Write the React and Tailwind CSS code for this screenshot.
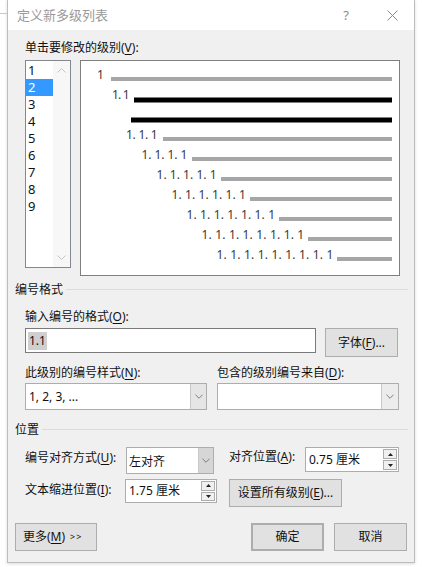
import React from "react";

const font = { fontFamily: '"Noto Sans", "Noto Sans CJK SC", sans-serif' };

function Chevron({ up = false, color = "#606060", w = 9, h = 5 }) {
  return (
    <svg width={w} height={h} viewBox="0 0 9 5" className="block">
      <polyline
        points={up ? "0.5,4.5 4.5,0.5 8.5,4.5" : "0.5,0.5 4.5,4.5 8.5,0.5"}
        fill="none"
        stroke={color}
        strokeWidth="1"
      />
    </svg>
  );
}

function DropButton({ className = "" }) {
  return (
    <div className={"flex items-center justify-center border-l border-[#c9c9c9] " + className}>
      <Chevron color="#707070" w={8} h={5} />
    </div>
  );
}

function Spinner() {
  return (
    <div className="flex flex-col gap-[1px] py-[1px] pr-[1px]">
      <div className="w-[14px] h-[10px] border border-[#adadad] bg-[#f0f0f0] flex items-center justify-center">
        <svg width="5" height="3" viewBox="0 0 5 3"><polygon points="0,3 2.5,0 5,3" fill="#222" /></svg>
      </div>
      <div className="w-[14px] h-[10px] border border-[#adadad] bg-[#f0f0f0] flex items-center justify-center">
        <svg width="5" height="3" viewBox="0 0 5 3"><polygon points="0,0 2.5,3 5,0" fill="#222" /></svg>
      </div>
    </div>
  );
}

function Btn({ children, className = "" }) {
  return (
    <div
      className={
        "flex items-center justify-center bg-[#e1e1e1] border border-[#adadad] text-[12px] text-[#111] " +
        className
      }
    >
      {children}
    </div>
  );
}

const rows = [
  { n: 1, x: 97, bar: 111, black: false },
  { n: 2, x: 112, bar: 134, black: true },
  { n: 0, x: 0, bar: 131, black: true },
  { n: 3, x: 126, bar: 163 },
  { n: 4, x: 141.5, bar: 192 },
  { n: 5, x: 156.5, bar: 221 },
  { n: 6, x: 171.5, bar: 250 },
  { n: 7, x: 186.5, bar: 279 },
  { n: 8, x: 201.5, bar: 308 },
  { n: 9, x: 216.5, bar: 337 },
];

function Preview() {
  // coordinates are page coords shifted by the box's origin (80,60)
  return (
    <svg width="318" height="214" viewBox="81 61 318 214" className="block">
      {rows.map((r, i) => {
        const base = 79 + i * 20;
        const barY = r.black ? base - 1.5 : base - 2;
        const label = Array.from({ length: r.n }, () => "1").join(". ");
        const len = r.n > 1 ? 17.5 + 14.2 * (r.n - 2) : undefined;
        return (
          <g key={i}>
            {r.n > 0 && (
              <text
                x={r.x}
                y={base}
                fontSize="12"
                fill="#3a3a3a"
                fontFamily='"Noto Sans", sans-serif'
                textLength={len}
                lengthAdjust={len ? "spacing" : undefined}
              >
                {label}
              </text>
            )}
            <rect
              x={r.bar}
              y={barY}
              width={392 - r.bar}
              height={r.black ? 5 : 4}
              fill={r.black ? "#000" : "#a6a6a6"}
            />
          </g>
        );
      })}
    </svg>
  );
}

function U({ children }) {
  return <span className="underline underline-offset-2">{children}</span>;
}

function GroupHeader({ children }) {
  return (
    <div className="flex items-center h-[17px] pl-[7px] pr-[6px]">
      <span className="text-[12px] text-[#111] leading-[17px]">{children}</span>
      <div className="flex-1 h-px bg-[#dcdcdc] ml-[3px]" />
    </div>
  );
}

export default function App() {
  return (
    <div className="w-[422px] h-[567px] bg-white relative overflow-hidden" style={font}>
      <div className="absolute left-0 top-[13px] w-[7px] h-px bg-[#c8c8c8]" />
      <div className="ml-[7px] w-[408px] h-[563px] border border-t-0 border-[#bdbdbd] bg-[#f0f0f0] flex flex-col shadow-[0_1px_3px_rgba(0,0,0,0.15)]">
        {/* title bar */}
        <div className="h-[30px] bg-white flex items-center shrink-0">
          <span className="ml-[9px] text-[13px] text-[#9a9a9a] leading-none">定义新多级列表</span>
          <span className="ml-auto mr-[38px] text-[13px] text-[#8a8a8a] leading-none">?</span>
          <svg width="11" height="11" viewBox="0 0 11 11" className="mr-[16px]">
            <path d="M0.5 0.5 L10.5 10.5 M10.5 0.5 L0.5 10.5" stroke="#8a8a8a" strokeWidth="1" />
          </svg>
        </div>

        {/* level picker */}
        <div className="mt-[9px] pl-[17px] h-[17px] text-[12px] leading-[17px] text-[#111]">
          单击要修改的级别(<U>V</U>):
        </div>
        <div className="mt-[4px] pl-[17px] flex items-start gap-[9px]">
          <div className="w-[46px] h-[208px] border border-[#828790] bg-white flex">
            <div className="w-[27px] pt-[1px] flex flex-col">
              {[1, 2, 3, 4, 5, 6, 7, 8, 9].map((n) => (
                <div
                  key={n}
                  className={
                    "h-[17px] pl-[2px] text-[13px] leading-[17px] " +
                    (n === 2 ? "bg-[#3399ff] text-white" : "text-[#111]")
                  }
                >
                  {n}
                </div>
              ))}
            </div>
            <div className="flex-1 bg-[#f7f7f7] flex flex-col items-center justify-between pt-[7px] pb-[7px]">
              <Chevron up color="#c4c4c4" />
              <Chevron color="#c4c4c4" />
            </div>
          </div>
          <div className="w-[320px] h-[216px] border border-[#7f7f7f] bg-white">
            <Preview />
          </div>
        </div>

        {/* number format */}
        <div className="mt-[5px]">
          <GroupHeader>编号格式</GroupHeader>
        </div>
        <div className="mt-[10px] pl-[17px] h-[17px] text-[12px] leading-[17px] text-[#111]">
          输入编号的格式(<U>O</U>):
        </div>
        <div className="mt-[3px] pl-[17px] flex items-start gap-[9px]">
          <div className="w-[291px] h-[25px] border border-[#7a7a7a] bg-white flex items-center pl-[2px]">
            <span className="bg-[#cfcfcf] text-[12px] leading-[18px] px-[1px] text-[#111]">1.1</span>
          </div>
          <Btn className="w-[73px] h-[29px]">
            字体(<U>F</U>)...
          </Btn>
        </div>
        <div className="mt-[7px] pl-[17px] flex h-[17px] text-[12px] leading-[17px] text-[#111]">
          <div className="w-[192px]">
            此级别的编号样式(<U>N</U>):
          </div>
          <div>
            包含的级别编号来自(<U>D</U>):
          </div>
        </div>
        <div className="mt-[2px] pl-[17px] flex gap-[10px]">
          <div className="w-[182px] h-[27px] border border-[#adadad] bg-white flex">
            <div className="flex-1 flex items-center pl-[3px] text-[12px] text-[#111]">1, 2, 3, ...</div>
            <DropButton className="w-[16px] bg-[#e5e5e5]" />
          </div>
          <div className="w-[182px] h-[27px] border border-[#adadad] bg-white flex">
            <div className="flex-1" />
            <DropButton className="w-[17px] bg-[#ececec]" />
          </div>
        </div>

        {/* position */}
        <div className="mt-[11px]">
          <GroupHeader>位置</GroupHeader>
        </div>
        <div className="mt-[9px] pl-[17px] flex items-start">
          <div className="w-[101px] pt-[2px] text-[12px] leading-[17px] text-[#111]">
            编号对齐方式(<U>U</U>):
          </div>
          <div className="w-[88px] h-[27px] border border-[#adadad] bg-white flex">
            <div className="flex-1 flex items-center pl-[2px] pt-[3px] text-[12px] text-[#111]">左对齐</div>
            <DropButton className="w-[15px] bg-[#d6d6d6]" />
          </div>
          <div className="ml-[15px] w-[76px] pt-[1px] text-[12px] leading-[17px] text-[#111]">
            对齐位置(<U>A</U>):
          </div>
          <div className="w-[94px] h-[25px] border border-[#adadad] bg-white flex">
            <div className="flex-1 flex items-center pl-[3px] pt-[1px] text-[12px] text-[#111]">0.75 厘米</div>
            <Spinner />
          </div>
        </div>
        <div className="mt-[5px] pl-[17px] flex items-start">
          <div className="w-[100px] pt-[2px] text-[12px] leading-[17px] text-[#111]">
            文本缩进位置(<U>I</U>):
          </div>
          <div className="w-[92px] h-[24px] border border-[#adadad] bg-white flex">
            <div className="flex-1 flex items-center pl-[3px] text-[12px] text-[#111]">1.75 厘米</div>
            <Spinner />
          </div>
          <Btn className="ml-[12px] w-[113px] h-[28px]">
            设置所有级别(<U>E</U>)...
          </Btn>
        </div>

        {/* buttons */}
        <div className="mt-[16px] pl-[7px] flex">
          <Btn className="w-[82px] h-[28px] justify-start pl-[7px]">
            更多(<U>M</U>)<span className="ml-[5px] text-[9px] tracking-[1px]">&gt;&gt;</span>
          </Btn>
          <Btn className="ml-[154px] w-[73px] h-[28px] border-2 border-[#0078d7]">确定</Btn>
          <Btn className="ml-[10px] w-[73px] h-[28px]">取消</Btn>
        </div>
      </div>
    </div>
  );
}
